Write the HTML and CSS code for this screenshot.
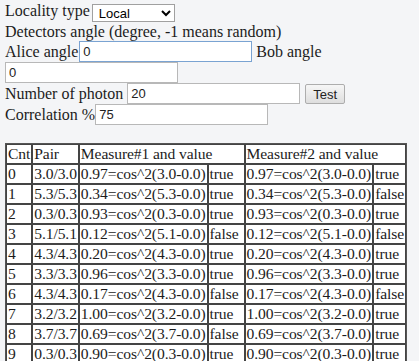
FILE: index.html
```html
<!DOCTYPE html>
<html lang="en">
  <head>
    <meta charset="UTF-8" />
    <title>Bell test</title>
    <link rel="stylesheet" href="styles.css">
  </head>
  <body>
    <form class="setup">
      <div class="line">Locality type<select class="pick"><option>Local</option></select></div>
      <div class="line short">Detectors angle (degree, -1 means random)</div>
      <div class="line">Alice angle<input class="field focus" type="text" value="0" /> Bob angle</div>
      <div class="line"><input class="field" type="text" value="0" /></div>
      <div class="line">Number of photon <input class="field" type="text" value="20" /> <button type="button" class="btn">Test</button></div>
      <div class="line">Correlation %<input class="field" type="text" value="75" /></div>
    </form>

    <table class="results">
      <colgroup>
        <col />
        <col />
        <col />
        <col class="flag-wide" />
        <col />
        <col />
      </colgroup>
      <tr><td>Cnt</td><td>Pair</td><td colspan="2">Measure#1 and value</td><td colspan="2">Measure#2 and value</td></tr>
      <tr><td>0</td><td>3.0/3.0</td><td>0.97=cos^2(3.0-0.0)</td><td>true</td><td>0.97=cos^2(3.0-0.0)</td><td>true</td></tr>
      <tr><td>1</td><td>5.3/5.3</td><td>0.34=cos^2(5.3-0.0)</td><td>true</td><td>0.34=cos^2(5.3-0.0)</td><td>false</td></tr>
      <tr><td>2</td><td>0.3/0.3</td><td>0.93=cos^2(0.3-0.0)</td><td>true</td><td>0.93=cos^2(0.3-0.0)</td><td>true</td></tr>
      <tr><td>3</td><td>5.1/5.1</td><td>0.12=cos^2(5.1-0.0)</td><td>false</td><td>0.12=cos^2(5.1-0.0)</td><td>false</td></tr>
      <tr><td>4</td><td>4.3/4.3</td><td>0.20=cos^2(4.3-0.0)</td><td>true</td><td>0.20=cos^2(4.3-0.0)</td><td>true</td></tr>
      <tr><td>5</td><td>3.3/3.3</td><td>0.96=cos^2(3.3-0.0)</td><td>true</td><td>0.96=cos^2(3.3-0.0)</td><td>true</td></tr>
      <tr><td>6</td><td>4.3/4.3</td><td>0.17=cos^2(4.3-0.0)</td><td>false</td><td>0.17=cos^2(4.3-0.0)</td><td>false</td></tr>
      <tr><td>7</td><td>3.2/3.2</td><td>1.00=cos^2(3.2-0.0)</td><td>true</td><td>1.00=cos^2(3.2-0.0)</td><td>true</td></tr>
      <tr><td>8</td><td>3.7/3.7</td><td>0.69=cos^2(3.7-0.0)</td><td>false</td><td>0.69=cos^2(3.7-0.0)</td><td>true</td></tr>
      <tr><td>9</td><td>0.3/0.3</td><td>0.90=cos^2(0.3-0.0)</td><td>true</td><td>0.90=cos^2(0.3-0.0)</td><td>true</td></tr>
    </table>
  </body>
</html>
```

FILE: styles.css
```css
body {
  font-family: "Liberation Serif", "Times New Roman", serif;
  font-size: 16px;
  color: #1c1c1c;
  background: #f4f5f7;
  margin: 0 5px;
}

.setup {
  margin: 0;
}

.line {
  height: 21px;
  line-height: 21px;
  white-space: nowrap;
}

.line.short {
  height: 20px;
  line-height: 22px;
}

.pick {
  width: 83px;
  height: 18px;
  margin: 4px 0 0 2px;
  font-family: "Liberation Sans", Arial, sans-serif;
  font-size: 13px;
  color: #000;
  background: #fff;
  border: 1px solid #a0a0a0;
  padding: 0 2px;
  vertical-align: top;
}

.field {
  width: 173px;
  height: 21px;
  box-sizing: border-box;
  font-family: "Liberation Sans", Arial, sans-serif;
  font-size: 13px;
  color: #222;
  background: #fff;
  border: 1px solid #b8b8b8;
  padding: 1px 3px;
  margin: 0;
  vertical-align: top;
}

.field.focus {
  border-color: #7aa3d2;
  margin-left: 1px;
}

.btn {
  height: 20px;
  width: 40px;
  padding: 0;
  font-family: "Liberation Sans", Arial, sans-serif;
  font-size: 13px;
  color: #222;
  background: linear-gradient(#f6f6f6, #dedede);
  border: 1px solid #adadad;
  border-radius: 2px;
  vertical-align: top;
  margin: 1px 0 0 1px;
}

.results {
  margin-top: 18px;
  border: 1px solid #555;
  border-spacing: 0;
  font-size: 15.6px;
  letter-spacing: -0.1px;
  background: #fff;
}

.results .flag-wide {
  width: 37px;
}

.results td {
  border: 1px solid #444;
  padding: 0 1px;
  height: 18px;
  line-height: 18px;
  white-space: nowrap;
}
```
